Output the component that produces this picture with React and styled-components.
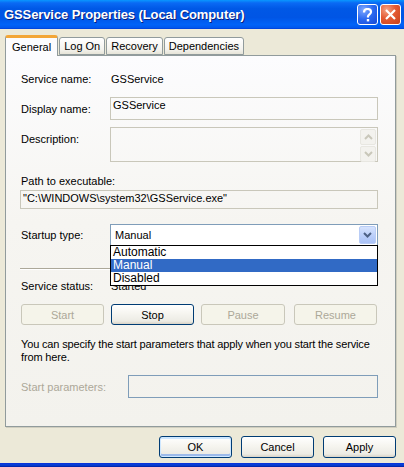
import React from 'react';
import styled, { createGlobalStyle, css } from 'styled-components';

const GlobalStyle = createGlobalStyle`
    html, body {
        margin: 0;
        padding: 0;
        background: #ece9d8;
    }
    body {
        font-family: "Liberation Sans", Arial, sans-serif;
        font-size: 11px;
        color: #000;
    }
`;

const Window = styled.div`
    width: 404px;
    height: 467px;
    box-sizing: border-box;
    display: flex;
    flex-direction: column;
    background: #ece9d8;
    overflow: hidden;
`;

const TitleBar = styled.div`
    flex: none;
    height: 29px;
    box-sizing: border-box;
    display: flex;
    align-items: center;
    padding: 0 3px 0 4px;
    background: linear-gradient(
        180deg,
        #0997ff 0%,
        #0a6af4 10%,
        #0058e6 30%,
        #0055e5 60%,
        #0063f8 85%,
        #0058ee 95%,
        #003dd7 100%
    );
    color: #fff;
`;

const TitleText = styled.div`
    flex: 1;
    font-family: "Liberation Sans", Arial, sans-serif;
    font-weight: bold;
    font-size: 13px;
    letter-spacing: -0.1px;
    text-shadow: 1px 1px 0 #0a1e7a;
    white-space: nowrap;
`;

const CaptionBtn = styled.div`
    width: 21px;
    height: 21px;
    box-sizing: border-box;
    margin-left: 2px;
    border: 1px solid #fff;
    border-radius: 3px;
    display: flex;
    align-items: center;
    justify-content: center;
    color: #fff;
    ${(p) =>
        p.close
            ? css`
                  background: radial-gradient(circle at 30% 25%, #f4a285 0%, #e45a33 45%, #c8401a 100%);
              `
            : css`
                  background: radial-gradient(circle at 30% 25%, #7fa9ff 0%, #2a68f0 50%, #1648d4 100%);
              `}
`;

const Body = styled.div`
    flex: 1;
    display: flex;
    flex-direction: column;
    padding: 6px 8px 0 5px;
`;

const TabRow = styled.div`
    display: flex;
    align-items: flex-end;
    height: 20px;
    position: relative;
    z-index: 2;
`;

const Tab = styled.div`
    box-sizing: border-box;
    height: ${(p) => (p.active ? '21px' : '18px')};
    margin-bottom: ${(p) => (p.active ? '-1px' : '0')};
    margin-right: 1px;
    padding: ${(p) => (p.active ? '3px 6px 0 6px' : '2px 4px 0 4px')};
    border: 1px solid #919b9c;
    border-bottom: ${(p) => (p.active ? 'none' : '1px solid #919b9c')};
    border-radius: 3px 3px 0 0;
    background: ${(p) => (p.active ? '#fcfcfe' : 'linear-gradient(180deg, #fff 0%, #f4f3ee 70%, #e6e4d8 100%)')};
    white-space: nowrap;
    ${(p) =>
        p.active &&
        css`
            border-top: 3px solid #f3a637;
        `}
`;

const Panel = styled.div`
    box-sizing: border-box;
    height: 372px;
    border: 1px solid #919b9c;
    box-shadow: 1px 1px 0 #d0cebf;
    background: linear-gradient(180deg, #fcfcfe 0%, #f6f5f1 45%, #f3f2ed 100%);
    padding: 0 17px 0 14px;
    display: flex;
    flex-direction: column;
`;

const Row = styled.div`
    display: flex;
    align-items: ${(p) => (p.top ? 'flex-start' : 'center')};
    margin-top: ${(p) => p.mt || 0}px;
    height: ${(p) => (p.h ? `${p.h}px` : 'auto')};
    position: relative;
`;

const Label = styled.div`
    width: ${(p) => p.w || 90}px;
    flex: none;
    padding-left: 1px;
    box-sizing: border-box;
    padding-top: ${(p) => p.pt || 0}px;
    color: ${(p) => (p.disabled ? '#aca899' : '#000')};
    white-space: nowrap;
`;

const Value = styled.div`
    padding-left: 1px;
`;

const TextBox = styled.div`
    flex: 1;
    box-sizing: border-box;
    height: ${(p) => p.h}px;
    border: 1px solid ${(p) => (p.blue ? '#7f9db9' : '#c9c7ba')};
    background: transparent;
    padding: 1px 2px;
    display: flex;
    align-items: flex-start;
    justify-content: space-between;
    white-space: nowrap;
`;

const ScrollCol = styled.div`
    display: flex;
    flex-direction: column;
    gap: 1px;
    margin-right: -1px;
`;

const ScrollBtn = styled.div`
    width: 16px;
    height: 16px;
    box-sizing: border-box;
    border: 1px solid #e8e7e1;
    border-radius: 2px;
    background: #f3f2ee;
    display: flex;
    align-items: center;
    justify-content: center;
`;

const PlainText = styled.div`
    margin-top: ${(p) => p.mt || 0}px;
    line-height: ${(p) => p.lh || 12}px;
    padding-left: 1px;
    white-space: nowrap;
    letter-spacing: ${(p) => p.ls || 0}px;
`;

const Combo = styled.div`
    flex: 1;
    position: relative;
    box-sizing: border-box;
    height: 22px;
    border: 1px solid #7f9db9;
    background: #fff;
    display: flex;
    align-items: center;
    padding: 0 1px 0 4px;
`;

const ComboText = styled.div`
    flex: 1;
`;

const ComboBtn = styled.div`
    width: 17px;
    height: 18px;
    box-sizing: border-box;
    border: 1px solid #b9cdf6;
    border-radius: 2px;
    background: linear-gradient(180deg, #d6e3fd 0%, #b8cdfa 60%, #aac2f6 100%);
    display: flex;
    align-items: center;
    justify-content: center;
`;

const DropList = styled.div`
    position: absolute;
    left: -1px;
    right: -1px;
    top: 20px;
    border: 1px solid #000;
    background: #fff;
    z-index: 5;
    font-size: 12px;
`;

const DropItem = styled.div`
    height: 13px;
    line-height: 13px;
    padding-left: 2px;
    background: ${(p) => (p.selected ? '#316ac5' : '#fff')};
    color: ${(p) => (p.selected ? '#fff' : '#000')};
`;

const Separator = styled.div`
    margin-top: ${(p) => p.mt}px;
    height: 1px;
    background: #aca899;
    box-shadow: 0 1px 0 #fff;
`;

const ButtonRow = styled.div`
    display: flex;
    margin-top: ${(p) => p.mt || 0}px;
    padding-left: 1px;
`;

const XpButton = styled.div`
    box-sizing: border-box;
    width: ${(p) => p.w || 73}px;
    height: ${(p) => p.h || 21}px;
    margin-left: ${(p) => p.ml || 0}px;
    border: 1px solid ${(p) => (p.disabled ? '#c9c7ba' : '#003c74')};
    border-radius: 3px;
    background: ${(p) =>
        p.disabled ? '#f5f4ea' : 'linear-gradient(180deg, #ffffff 0%, #f7f6f1 40%, #ecebe4 85%, #d8d2c6 100%)'};
    color: ${(p) => (p.disabled ? '#aca899' : '#000')};
    display: flex;
    align-items: center;
    justify-content: center;
    ${(p) =>
        p.focus &&
        css`
            box-shadow: inset 0 0 0 1px #cee7ff, inset 0 -2px 0 1px #9cbaea, inset 0 2px 0 0 #cee7ff;
        `}
`;

const Footer = styled.div`
    display: flex;
    justify-content: flex-end;
    gap: 9px;
    margin-top: 9px;
`;

const BottomEdge = styled.div`
    margin-top: auto;
    height: 4px;
    flex: none;
    background: linear-gradient(180deg, #0831d9 0%, #0842d8 50%, #001ea0 100%);
`;

const Chevron = ({ color = '#4d6185' }) => (
    <svg width="9" height="6" viewBox="0 0 9 6">
        <path d="M1 1 L4.5 4.5 L8 1" fill="none" stroke={color} strokeWidth="2" />
    </svg>
);

const ChevronUp = ({ color = '#c9c7ba' }) => (
    <svg width="9" height="6" viewBox="0 0 9 6">
        <path d="M1 5 L4.5 1.5 L8 5" fill="none" stroke={color} strokeWidth="2" />
    </svg>
);

const App = () => {
    return (
        <>
            <GlobalStyle />
            <Window>
                <TitleBar>
                    <TitleText>GSService Properties (Local Computer)</TitleText>
                    <CaptionBtn>
                        <svg width="11" height="14" viewBox="0 0 11 14">
                            <path
                                d="M2 4.5 C2 1.8 3.8 1 5.5 1 C7.5 1 9 2.2 9 4 C9 6 6.5 6.5 6 8.2 L6 9.5"
                                fill="none"
                                stroke="#fff"
                                strokeWidth="2.2"
                            />
                            <rect x="4.8" y="11" width="2.4" height="2.4" fill="#fff" />
                        </svg>
                    </CaptionBtn>
                    <CaptionBtn close>
                        <svg width="11" height="11" viewBox="0 0 11 11">
                            <path d="M1 1 L10 10 M10 1 L1 10" stroke="#fff" strokeWidth="2.2" />
                        </svg>
                    </CaptionBtn>
                </TitleBar>
                <Body>
                    <TabRow>
                        <Tab active>General</Tab>
                        <Tab>Log On</Tab>
                        <Tab>Recovery</Tab>
                        <Tab>Dependencies</Tab>
                    </TabRow>
                    <Panel>
                        <Row mt={14} h={18}>
                            <Label>Service name:</Label>
                            <Value>GSService</Value>
                        </Row>
                        <Row mt={9} h={23}>
                            <Label>Display name:</Label>
                            <TextBox h={23}>GSService</TextBox>
                        </Row>
                        <Row mt={7} h={35} top>
                            <Label pt={6}>Description:</Label>
                            <TextBox h={35}>
                                <span />
                                <ScrollCol>
                                    <ScrollBtn>
                                        <ChevronUp />
                                    </ScrollBtn>
                                    <ScrollBtn>
                                        <Chevron color="#c9c7ba" />
                                    </ScrollBtn>
                                </ScrollCol>
                            </TextBox>
                        </Row>
                        <PlainText mt={13}>Path to executable:</PlainText>
                        <Row mt={3} h={19}>
                            <TextBox h={19}>"C:\WINDOWS\system32\GSService.exe"</TextBox>
                        </Row>
                        <Row mt={15} h={22}>
                            <Label>Startup type:</Label>
                            <Combo>
                                <ComboText>Manual</ComboText>
                                <ComboBtn>
                                    <Chevron />
                                </ComboBtn>
                                <DropList>
                                    <DropItem>Automatic</DropItem>
                                    <DropItem selected>Manual</DropItem>
                                    <DropItem>Disabled</DropItem>
                                </DropList>
                            </Combo>
                        </Row>
                        <Separator mt={22} />
                        <Row mt={11} h={12}>
                            <Label>Service status:</Label>
                            <Value>Started</Value>
                        </Row>
                        <ButtonRow mt={12}>
                            <XpButton w={83} disabled>
                                Start
                            </XpButton>
                            <XpButton w={83} ml={7}>
                                Stop
                            </XpButton>
                            <XpButton w={84} ml={7} disabled>
                                Pause
                            </XpButton>
                            <XpButton w={83} ml={9} disabled>
                                Resume
                            </XpButton>
                        </ButtonRow>
                        <PlainText mt={13} lh={13} ls={-0.15}>
                            You can specify the start parameters that apply when you start the service
                            <br />
                            from here.
                        </PlainText>
                        <Row mt={11} h={23}>
                            <Label w={108} disabled>
                                Start parameters:
                            </Label>
                            <TextBox h={23} blue />
                        </Row>
                    </Panel>
                    <Footer>
                        <XpButton h={22} focus>
                            OK
                        </XpButton>
                        <XpButton h={22}>Cancel</XpButton>
                        <XpButton h={22}>Apply</XpButton>
                    </Footer>
                </Body>
                <BottomEdge />
            </Window>
        </>
    );
};

export default App;
